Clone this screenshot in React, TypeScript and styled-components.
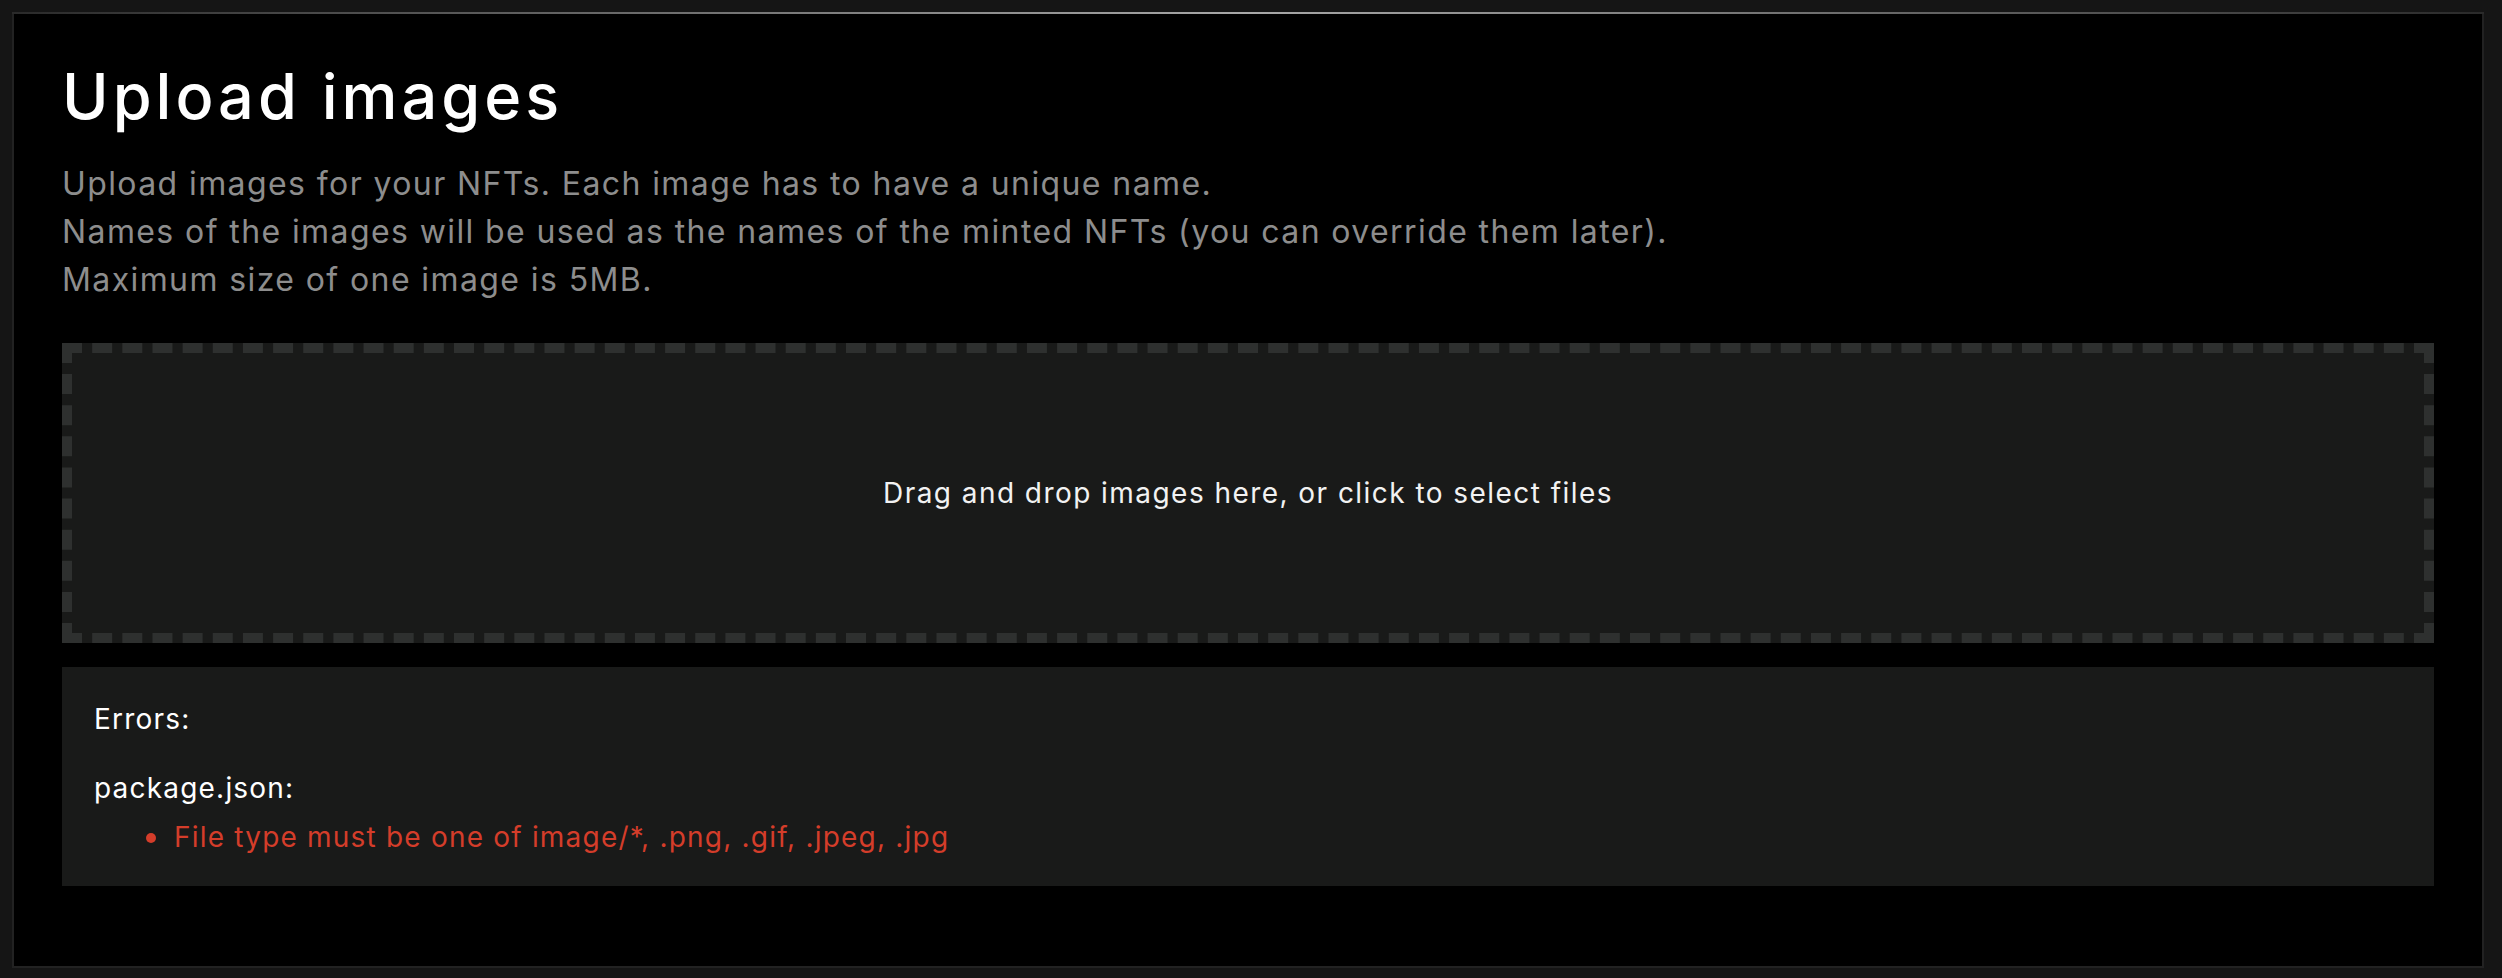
import React from "react";
import styled, { createGlobalStyle } from "styled-components";

const GlobalStyle = createGlobalStyle`
  html, body {
    margin: 0;
    padding: 0;
    background: #151515;
  }
  body {
    font-family: "Inter", "Liberation Sans", sans-serif;
    color: #ffffff;
  }
  * { box-sizing: border-box; }
`;

const Page = styled.div`
  padding: 12px 18px 10px 12px;
  min-height: 978px;
`;

const Panel = styled.section`
  position: relative;
  height: 956px;
  background: #000;
  border: 2px solid #222222;
  padding: 46px 48px 0 48px;
  &::before {
    content: "";
    position: absolute;
    left: -2px;
    right: -2px;
    top: -2px;
    height: 2px;
    background: linear-gradient(90deg, #2a2a2a 0%, #6a6a6a 25%, #a8a8a8 50%, #6a6a6a 75%, #2a2a2a 100%);
  }
`;

const Title = styled.h1`
  margin: 0 0 28px 0;
  font-family: "Inter", sans-serif;
  font-weight: 500;
  font-size: 63px;
  line-height: 72px;
  letter-spacing: 4px;
  color: #ffffff;
`;

const Description = styled.p`
  margin: 0 0 39px 0;
  font-size: 32px;
  line-height: 48px;
  letter-spacing: 1.4px;
  color: #8d8d8d;
`;

const DropZone = styled.div`
  height: 300px;
  background: #191a19;
  border: 10px dashed #2e302f;
  display: flex;
  align-items: center;
  justify-content: center;
  font-size: 28px;
  letter-spacing: 1.45px;
  color: #f2f2f2;
  cursor: pointer;
`;

const ErrorBox = styled.div`
  margin-top: 24px;
  background: #191a19;
  padding: 31px 32px 28px 32px;
  font-size: 28px;
  line-height: 42px;
  letter-spacing: 1.2px;
`;

const ErrorsLabel = styled.p`
  margin: 0 0 27px 0;
  color: #ffffff;
`;

const FileName = styled.p`
  margin: 0 0 7px 0;
  color: #ffffff;
`;

const ErrorList = styled.ul`
  list-style: none;
  margin: 0;
  padding: 0 0 0 52px;
`;

const ErrorItem = styled.li`
  position: relative;
  color: #d43d2a;
  padding-left: 28px;
  &::before {
    content: "";
    position: absolute;
    left: 0;
    top: 50%;
    width: 10px;
    height: 10px;
    margin-top: -4px;
    border-radius: 50%;
    background: #d43d2a;
  }
`;

export default function App() {
  return (
    <>
      <GlobalStyle />
      <Page>
        <Panel>
          <Title>Upload images</Title>
          <Description>
            Upload images for your NFTs. Each image has to have a unique name.
            <br />
            Names of the images will be used as the names of the minted NFTs (you can override them later).
            <br />
            Maximum size of one image is 5MB.
          </Description>
          <DropZone>Drag and drop images here, or click to select files</DropZone>
          <ErrorBox>
            <ErrorsLabel>Errors:</ErrorsLabel>
            <FileName>package.json:</FileName>
            <ErrorList>
              <ErrorItem>File type must be one of image/*, .png, .gif, .jpeg, .jpg</ErrorItem>
            </ErrorList>
          </ErrorBox>
        </Panel>
      </Page>
    </>
  );
}
